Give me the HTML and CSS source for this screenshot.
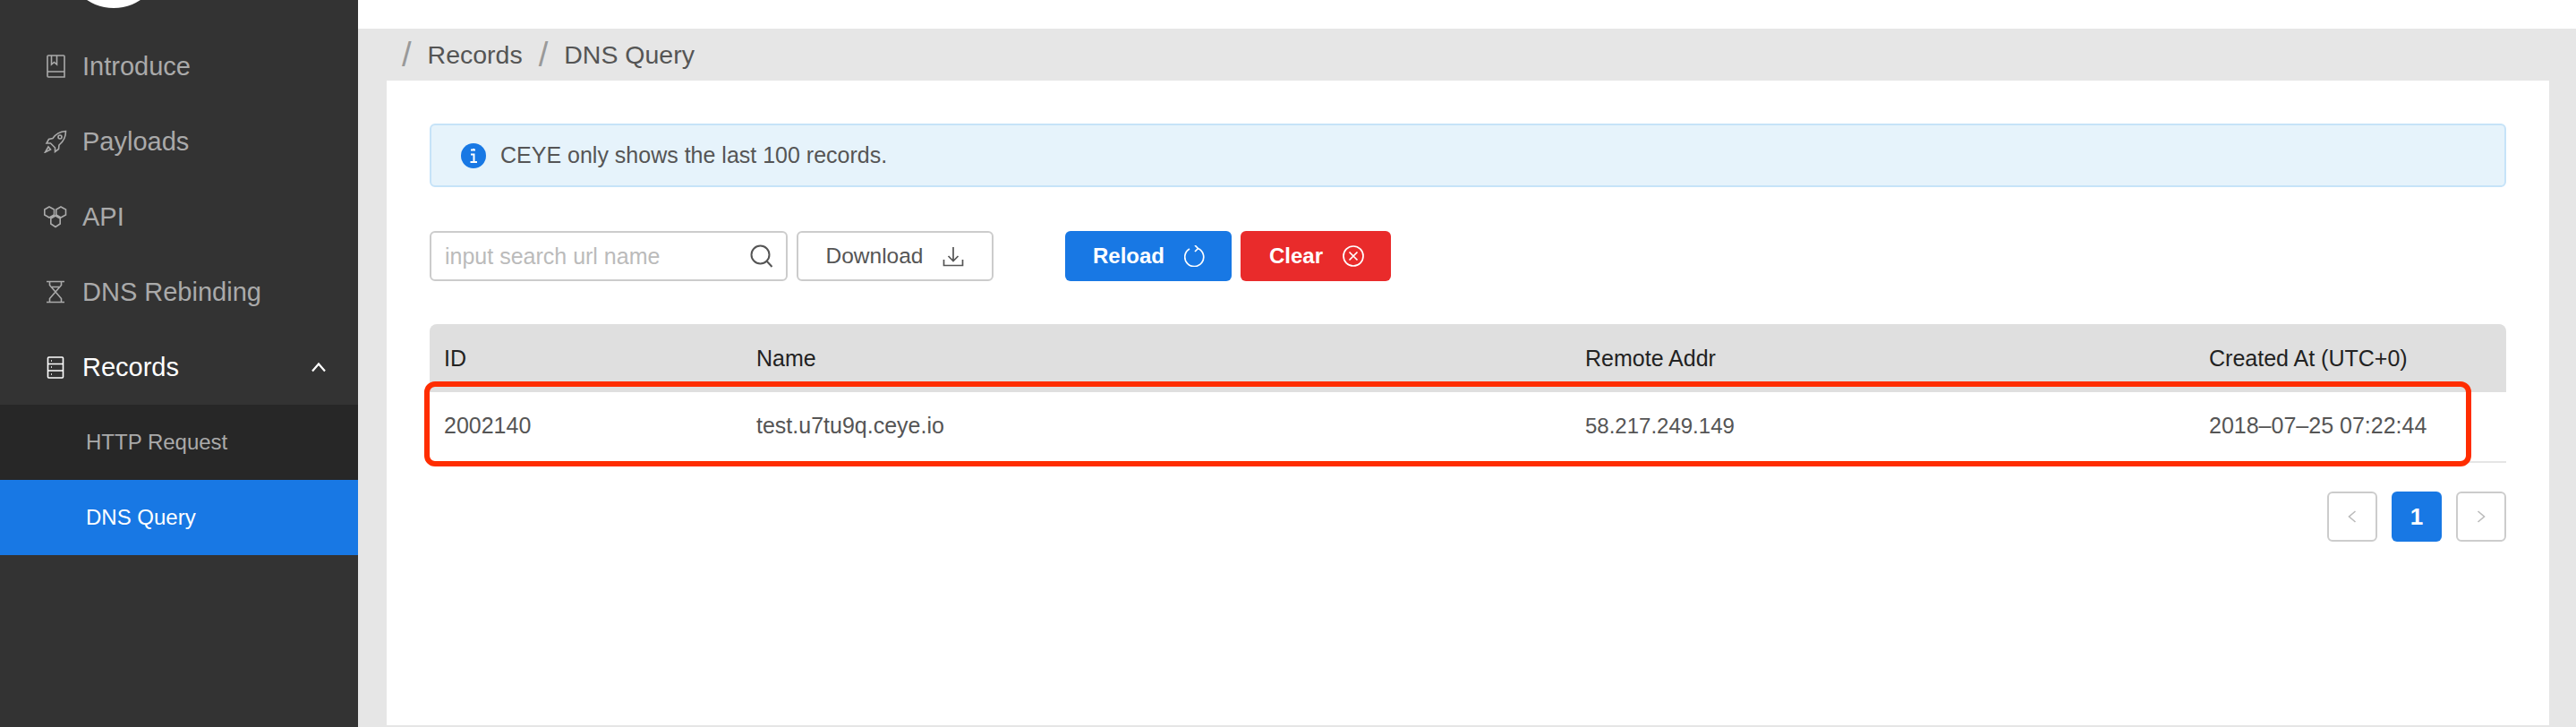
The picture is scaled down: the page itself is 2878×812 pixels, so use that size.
FILE: index.html
```html
<!DOCTYPE html>
<html lang="en">

<head>
    <meta charset="UTF-8">
    <meta name="viewport" content="width=device-width, initial-scale=1.0">
    <title>DNS Query</title>
    <link rel="stylesheet" href="styles.css">
</head>

<body>

    <aside class="sidebar">
        <div class="logo"><div class="logo-circle"></div></div>
        <nav>
            <a class="menu-item">
                <svg class="menu-icon" viewBox="0 0 26 26"><path d="M4 20V2a1 1 0 0 1 1-1h17a1 1 0 0 1 1 1v23H5a1 1 0 0 1-1-1v-4a1 1 0 0 1 1-1h18M8.500 1v10l3-2.500 3 2.500V1"/></svg>
                <span>Introduce</span>
            </a>
            <a class="menu-item">
                <svg class="menu-icon" viewBox="0 0 26 26"><path d="M24.500 1.500C18 2 13 5 10 9.500L5.500 10.500 3 15h4.500l5 5V24.500l4-3 .5-4.500C22 13 24.500 8 24.500 1.500z"/><circle cx="18" cy="8" r="2"/><path d="M5 19l-3.500 6 6-3z"/></svg>
                <span>Payloads</span>
            </a>
            <a class="menu-item">
                <svg class="menu-icon" viewBox="0 0 26 26"><path d="M6 2l5.500 3v6L6 14 .8 11V5zM19 2l5.500 3v6L19 14l-5.200-3V5zM13 12l5.200 3v6L13 24.500 7.800 21v-6z"/></svg>
                <span>API</span>
            </a>
            <a class="menu-item">
                <svg class="menu-icon" viewBox="0 0 26 26"><path d="M3 1.500h20M3 24.500h20M6.500 1.500v4L19.500 20.500v4M19.500 1.500v4L6.500 20.500v4M9 7.500h8"/></svg>
                <span>DNS Rebinding</span>
            </a>
            <a class="menu-item menu-open">
                <svg class="menu-icon" viewBox="0 0 26 26"><rect x="4.500" y="2" width="17" height="23" rx="1"/><path d="M4.500 9.500h17M4.500 17h17M8 6h1M8 13h1M8 21h1"/></svg>
                <span>Records</span>
                <svg class="menu-arrow" viewBox="0 0 16 12"><path d="M1 10.500l7-8 7 8"/></svg>
            </a>
            <div class="submenu">
                <a class="submenu-item">HTTP Request</a>
                <a class="submenu-item active">DNS Query</a>
            </div>
        </nav>
    </aside>

    <main class="main">
        <div class="breadcrumb">
            <span class="slash">/</span>
            <span>Records</span>
            <span class="slash">/</span>
            <span>DNS Query</span>
        </div>

        <section class="card">
            <div class="alert">
                <svg class="alert-icon" viewBox="0 0 28 28"><circle cx="14" cy="14" r="14" fill="#1878e4"/><path d="M11 7.500h5M14 6v1M11 12.500h3.500V21M10.500 21h7.500" stroke="#fff" stroke-width="2" fill="none"/></svg>
                <span>CEYE only shows the last 100 records.</span>
            </div>

            <div class="toolbar">
                <div class="search">
                    <span class="search-text">input search url name</span>
                    <svg class="search-icon" viewBox="0 0 26 26"><circle cx="11.500" cy="11.500" r="10"/><path d="M18.500 18.500l6 6.500"/></svg>
                </div>
                <button class="btn btn-default">
                    Download
                    <svg class="btn-icon" viewBox="0 0 24 24"><path d="M12 2v15M6.500 12l5.500 5.500 5.500-5.500M1.500 16v6.500h21V16"/></svg>
                </button>
                <button class="btn btn-primary">
                    Reload
                    <svg class="btn-icon" viewBox="0 0 24 24"><path d="M15.500 3.500A10.500 10.500 0 1 1 6 4M12 0l3.500 3.500L12 7"/></svg>
                </button>
                <button class="btn btn-danger">
                    Clear
                    <svg class="btn-icon" viewBox="0 0 24 24"><circle cx="12" cy="12" r="11"/><path d="M7.500 7.500l9 9M16.500 7.500l-9 9"/></svg>
                </button>
            </div>

            <div class="table-wrap">
                <table class="records">
                    <thead>
                        <tr>
                            <th class="col-id">ID</th>
                            <th class="col-name">Name</th>
                            <th class="col-addr">Remote Addr</th>
                            <th class="col-date">Created At (UTC+0)</th>
                        </tr>
                    </thead>
                    <tbody>
                        <tr>
                            <td>2002140</td>
                            <td>test.u7tu9q.ceye.io</td>
                            <td class="addr">58.217.249.149</td>
                            <td>2018–07–25 07:22:44</td>
                        </tr>
                    </tbody>
                </table>
                <div class="highlight"></div>
            </div>

            <div class="pagination">
                <a class="page"><svg class="page-arrow" viewBox="0 0 10 14"><path d="M8.500 1L1.500 7l7 6"/></svg></a>
                <a class="page page-active">1</a>
                <a class="page"><svg class="page-arrow" viewBox="0 0 10 14"><path d="M1.500 1l7 6-7 6"/></svg></a>
            </div>
        </section>
    </main>

</body>

</html>
```

FILE: styles.css
```css
* {
    box-sizing: border-box;
}

html, body {
    height: 100%;
}

body {
    font-family: 'Liberation Sans', Arial, sans-serif;
    margin: 0;
    display: flex;
    overflow: hidden;
    background-color: #fff;
    color: #555;
}

/* sidebar */
.sidebar {
    width: 400px;
    flex-shrink: 0;
    background-color: #333;
}

.logo {
    height: 32px;
    overflow: hidden;
}

.logo-circle {
    width: 108px;
    height: 108px;
    margin: -99px 0 0 73px;
    border-radius: 50%;
    background-color: #fff;
}

.menu-item {
    display: flex;
    align-items: center;
    height: 84px;
    padding-left: 49px;
    font-size: 29px;
    color: #aaa;
}

.menu-icon {
    width: 26px;
    height: 26px;
    margin-right: 17px;
    fill: none;
    stroke: #aaa;
    stroke-width: 1.6;
}

.menu-open {
    color: #fff;
}

.menu-open .menu-icon {
    stroke: #fff;
}

.menu-arrow {
    width: 16px;
    height: 12px;
    margin-left: auto;
    margin-right: 36px;
    fill: none;
    stroke: #fff;
    stroke-width: 2.2;
}

.submenu {
    background-color: #272727;
}

.submenu-item {
    display: flex;
    align-items: center;
    height: 84px;
    padding-left: 96px;
    font-size: 24px;
    color: #aaa;
}

.submenu-item.active {
    background-color: #1878e4;
    color: #fff;
}

/* main area */
.main {
    flex: 1;
    margin-top: 32px;
    padding-bottom: 2px;
    display: flex;
    flex-direction: column;
    background-color: #e6e6e6;
}

.breadcrumb {
    display: flex;
    align-items: center;
    gap: 18px;
    height: 58px;
    padding-left: 49px;
    font-size: 28.500px;
}

.slash {
    color: #999;
    font-size: 38px;
    font-weight: 300;
}

.card {
    flex: 1;
    margin: 0 30px 0 32px;
    padding: 48px;
    background-color: #fff;
}

.alert {
    display: flex;
    align-items: center;
    height: 71px;
    padding-left: 33px;
    border: 2px solid #c6e3f8;
    border-radius: 6px;
    background-color: #e6f3fb;
    font-size: 25px;
}

.alert-icon {
    width: 28px;
    height: 28px;
    margin-right: 16px;
}

.toolbar {
    display: flex;
    margin-top: 49px;
}

.search {
    display: flex;
    align-items: center;
    justify-content: space-between;
    width: 400px;
    height: 56px;
    padding: 0 14px 0 15px;
    border: 2px solid #ccc;
    border-radius: 6px;
    font-size: 25px;
}

.search-text {
    color: #bbb;
}

.search-icon {
    width: 26px;
    height: 26px;
    fill: none;
    stroke: #555;
    stroke-width: 2;
}

.btn {
    display: flex;
    align-items: center;
    justify-content: center;
    gap: 22px;
    height: 56px;
    border-radius: 6px;
    font-family: inherit;
    font-size: 24px;
}

.btn-icon {
    width: 24px;
    height: 24px;
    fill: none;
    stroke: currentColor;
    stroke-width: 1.7;
}

.btn-default {
    width: 220px;
    margin-left: 10px;
    border: 2px solid #ccc;
    background-color: #fff;
    color: #555;
    font-size: 24.500px;
}

.btn-primary {
    width: 186px;
    margin-left: 80px;
    padding-left: 8px;
    border: none;
    background-color: #1878e4;
    color: #fff;
    font-weight: bold;
}

.btn-danger {
    width: 168px;
    margin-left: 10px;
    padding-left: 8px;
    border: none;
    background-color: #e92b2b;
    color: #fff;
    font-weight: bold;
}

.table-wrap {
    position: relative;
    margin-top: 48px;
}

.records {
    width: 100%;
    border-collapse: collapse;
    table-layout: fixed;
    font-size: 25px;
}

.records th {
    height: 76px;
    padding: 0 0 0 16px;
    background-color: #dfdfdf;
    color: #222;
    font-weight: normal;
    text-align: left;
}

.records th:first-child {
    padding-left: 16px;
    border-top-left-radius: 8px;
}

.records th:last-child {
    border-top-right-radius: 8px;
}

.records td {
    height: 78px;
    padding: 0 0 2px 16px;
    border-bottom: 2px solid #e5e5e5;
}

.records td:first-child {
    padding-left: 16px;
}

.records td.addr {
    font-size: 24px;
}

.col-id {
    width: 349px;
}

.col-name {
    width: 926px;
}

.col-addr {
    width: 697px;
}

.highlight {
    position: absolute;
    top: 64px;
    left: -6px;
    width: 2287px;
    height: 95px;
    border: 6px solid #ff2d00;
    border-radius: 12px;
}

.pagination {
    display: flex;
    justify-content: flex-end;
    gap: 16px;
    margin-top: 32px;
}

.page {
    display: flex;
    align-items: center;
    justify-content: center;
    width: 56px;
    height: 56px;
    border: 2px solid #ccc;
    border-radius: 6px;
}

.page-active {
    border: none;
    background-color: #1878e4;
    color: #fff;
    font-size: 26px;
    font-weight: bold;
}

.page-arrow {
    width: 10px;
    height: 14px;
    fill: none;
    stroke: #bbb;
    stroke-width: 1.6;
}
```
